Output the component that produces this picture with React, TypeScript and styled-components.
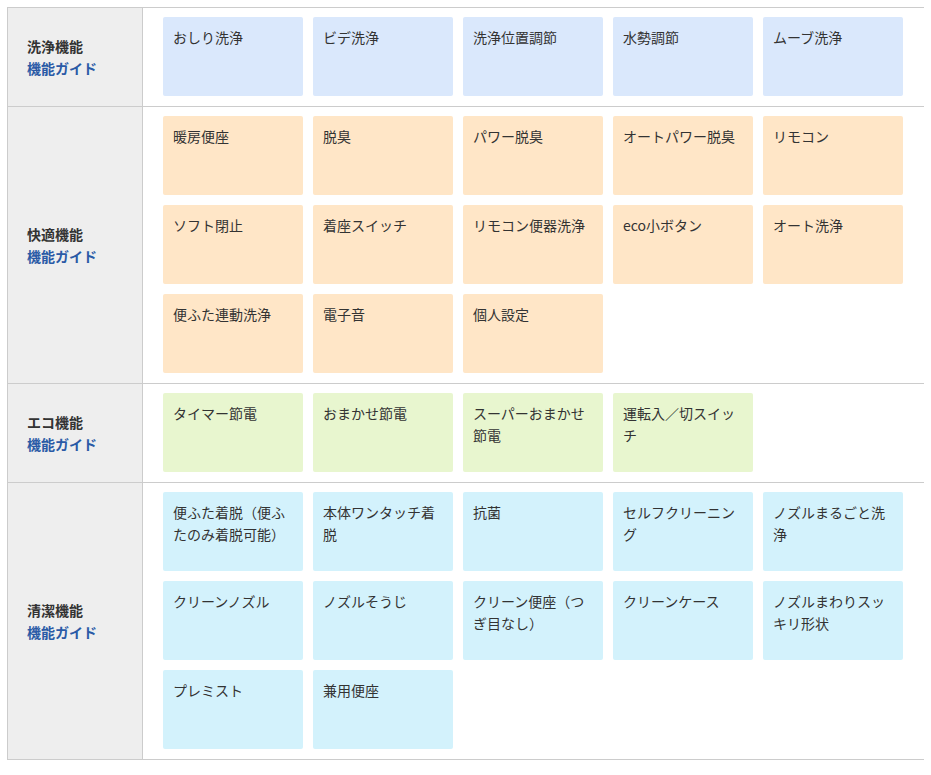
import React from "react";
import styled, { createGlobalStyle } from "styled-components";

const Global = createGlobalStyle`
  body { margin: 7px; font-family: "Noto Sans CJK JP", "Noto Sans", sans-serif; color: #333; background: #fff; }
`;

const Table = styled.div`
  width: 916px;
  border: 1px solid #ccc;
  display: flex;
  flex-direction: column;
`;
const Row = styled.div`
  display: flex;
  border-top: 1px solid #ccc;
  &:first-child { border-top: none; }
`;
const Head = styled.div`
  width: 115px;
  flex: none;
  background: #eeeeee;
  border-right: 1px solid #ccc;
  padding-left: 19px;
  display: flex;
  flex-direction: column;
  justify-content: center;
  font-size: 14px;
  font-weight: bold;
  line-height: 22px;
`;
const Guide = styled.a`
  color: #2a5aa6;
  text-decoration: none;
`;
const Grid = styled.div`
  flex: 1;
  padding: 9px 20px 10px 20px;
  display: grid;
  grid-template-columns: repeat(5, 140px);
  grid-auto-rows: 79px;
  gap: 10px;
`;
const Card = styled.div<{ $bg: string }>`
  background: ${(p) => p.$bg};
  border-radius: 2px;
  padding: 9px 10px;
  font-size: 14px;
  line-height: 22px;
  color: #333;
`;

const rows: { title: string; bg: string; items: string[] }[] = [
  { title: "洗浄機能", bg: "#dae8fc", items: ["おしり洗浄", "ビデ洗浄", "洗浄位置調節", "水勢調節", "ムーブ洗浄"] },
  {
    title: "快適機能",
    bg: "#ffe6c7",
    items: ["暖房便座", "脱臭", "パワー脱臭", "オートパワー脱臭", "リモコン", "ソフト閉止", "着座スイッチ", "リモコン便器洗浄", "eco小ボタン", "オート洗浄", "便ふた連動洗浄", "電子音", "個人設定"],
  },
  { title: "エコ機能", bg: "#e8f6cf", items: ["タイマー節電", "おまかせ節電", "スーパーおまかせ節電", "運転入／切スイッチ"] },
  {
    title: "清潔機能",
    bg: "#d3f2fc",
    items: ["便ふた着脱（便ふたのみ着脱可能）", "本体ワンタッチ着脱", "抗菌", "セルフクリーニング", "ノズルまるごと洗浄", "クリーンノズル", "ノズルそうじ", "クリーン便座（つぎ目なし）", "クリーンケース", "ノズルまわりスッキリ形状", "プレミスト", "兼用便座"],
  },
];

export default function App() {
  return (
    <>
      <Global />
      <Table>
        {rows.map((r) => (
          <Row key={r.title}>
            <Head>
              <div>{r.title}</div>
              <Guide href="#">機能ガイド</Guide>
            </Head>
            <Grid>
              {r.items.map((i) => (
                <Card key={i} $bg={r.bg}>{i}</Card>
              ))}
            </Grid>
          </Row>
        ))}
      </Table>
    </>
  );
}
